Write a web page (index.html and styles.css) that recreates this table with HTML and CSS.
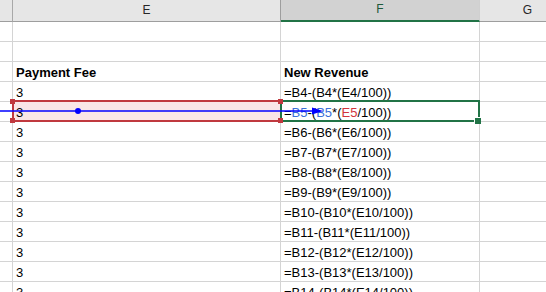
FILE: index.html
```html
<!DOCTYPE html>
<html lang="en">
<head>
    <meta charset="UTF-8">
    <title>Sheet1</title>
    <link rel="stylesheet" href="styles.css">
</head>
<body>
    <div class="sheet">
        <div class="col-headers">
            <div class="ch col-d"></div>
            <div class="ch col-e">E</div>
            <div class="ch col-f active">F</div>
            <div class="ch col-g">G</div>
        </div>

        <div class="grid" id="grid">
            <!-- rows are built by script below -->
        </div>

        <!-- selection overlays -->
        <div class="active-cell">
            <span class="fill-handle"></span>
        </div>
        <div class="range-ref">
            <span class="handle h-tl"></span>
            <span class="handle h-bl"></span>
            <span class="handle h-tr"></span>
            <span class="handle h-br"></span>
        </div>
        <svg class="trace" width="330" height="10" viewBox="0 0 330 10">
            <line x1="0" y1="5" x2="316" y2="5" stroke="#0000ff" stroke-width="1.5"/>
            <circle cx="78" cy="5" r="3" fill="#0000ff"/>
            <path d="M312 1.5 L323 5 L312 8.5 Z" fill="#0000ff"/>
        </svg>
    </div>

    <script>
        var grid = document.getElementById('grid');
        var rows = [
            ['', ''],
            ['', ''],
            ['<b>Payment Fee</b>', '<b>New Revenue</b>']
        ];
        for (var n = 4; n <= 14; n++) {
            var formula = '=B' + n + '-(B' + n + '*(E' + n + '/100))';
            if (n === 5) {
                formula = '=<span class="ref-b">B5</span>-(<span class="ref-b">B5</span>*(<span class="ref-e">E5</span>/100))';
            }
            rows.push(['3', formula]);
        }
        rows.forEach(function (r, i) {
            var row = document.createElement('div');
            row.className = 'row' + (i === 4 ? ' row-sel' : '');
            row.innerHTML =
                '<div class="cell col-d"></div>' +
                '<div class="cell col-e">' + r[0] + '</div>' +
                '<div class="cell col-f">' + r[1] + '</div>' +
                '<div class="cell col-g"></div>';
            grid.appendChild(row);
        });
    </script>
</body>
</html>
```

FILE: styles.css
```css
body {
    margin: 0;
    background-color: #ffffff;
    font-family: "Liberation Sans", Arial, sans-serif;
    overflow: hidden;
}
.sheet {
    position: relative;
    width: 546px;
    height: 292px;
    overflow: hidden;
}
.col-headers {
    display: flex;
    height: 22px;
    background-color: #e6e6e6;
}
.ch {
    box-sizing: border-box;
    height: 22px;
    border-right: 1px solid #d0d0d0;
    border-bottom: 1px solid #9e9e9e;
    font-size: 12px;
    line-height: 20px;
    text-align: center;
    color: #262626;
}
.ch.col-d {
    border-right-color: #a8a8a8;
}
.ch.col-e {
    border-right-color: #9e9e9e;
}
.ch.active {
    background-color: #d2d2d2;
    color: #1d5a3a;
    border-bottom: 2px solid #217346;
    line-height: 19px;
}
.col-d { width: 13px; flex: none; }
.col-e { width: 268px; flex: none; }
.col-f { width: 199px; flex: none; }
.col-g { width: 96px; flex: none; }
.row {
    display: flex;
    height: 20px;
}
.cell {
    box-sizing: border-box;
    height: 20px;
    border-right: 1px solid #d4d4d4;
    border-bottom: 1px solid #d4d4d4;
    padding: 0 0 1px 3px;
    display: flex;
    align-items: flex-end;
    font-size: 13px;
    line-height: 15px;
    color: #000000;
    white-space: nowrap;
    overflow: hidden;
}
.row-sel .col-e {
    background-color: #f9e6e7;
}
.ref-b {
    color: #3a6fd8;
}
.ref-e {
    color: #d1343c;
}
.range-ref {
    position: absolute;
    left: 12px;
    top: 100px;
    width: 268px;
    height: 22px;
    box-sizing: border-box;
    border-top: 2px solid #c0393f;
    border-bottom: 2px solid #c0393f;
    border-left: 2px solid #c0393f;
}
.handle {
    position: absolute;
    width: 5px;
    height: 5px;
    background-color: #c0393f;
}
.h-tl { left: -4px; top: -3px; }
.h-bl { left: -4px; bottom: -3px; }
.h-tr { right: -3px; top: -3px; }
.h-br { right: -3px; bottom: -3px; }
.active-cell {
    position: absolute;
    left: 280px;
    top: 100px;
    width: 200px;
    height: 22px;
    box-sizing: border-box;
    border: 2px solid #217346;
}
.fill-handle {
    position: absolute;
    right: -3px;
    bottom: -4px;
    width: 6px;
    height: 6px;
    background-color: #217346;
    border-left: 1px solid #ffffff;
    border-top: 1px solid #ffffff;
}
.trace {
    position: absolute;
    left: 0;
    top: 106px;
}
```
